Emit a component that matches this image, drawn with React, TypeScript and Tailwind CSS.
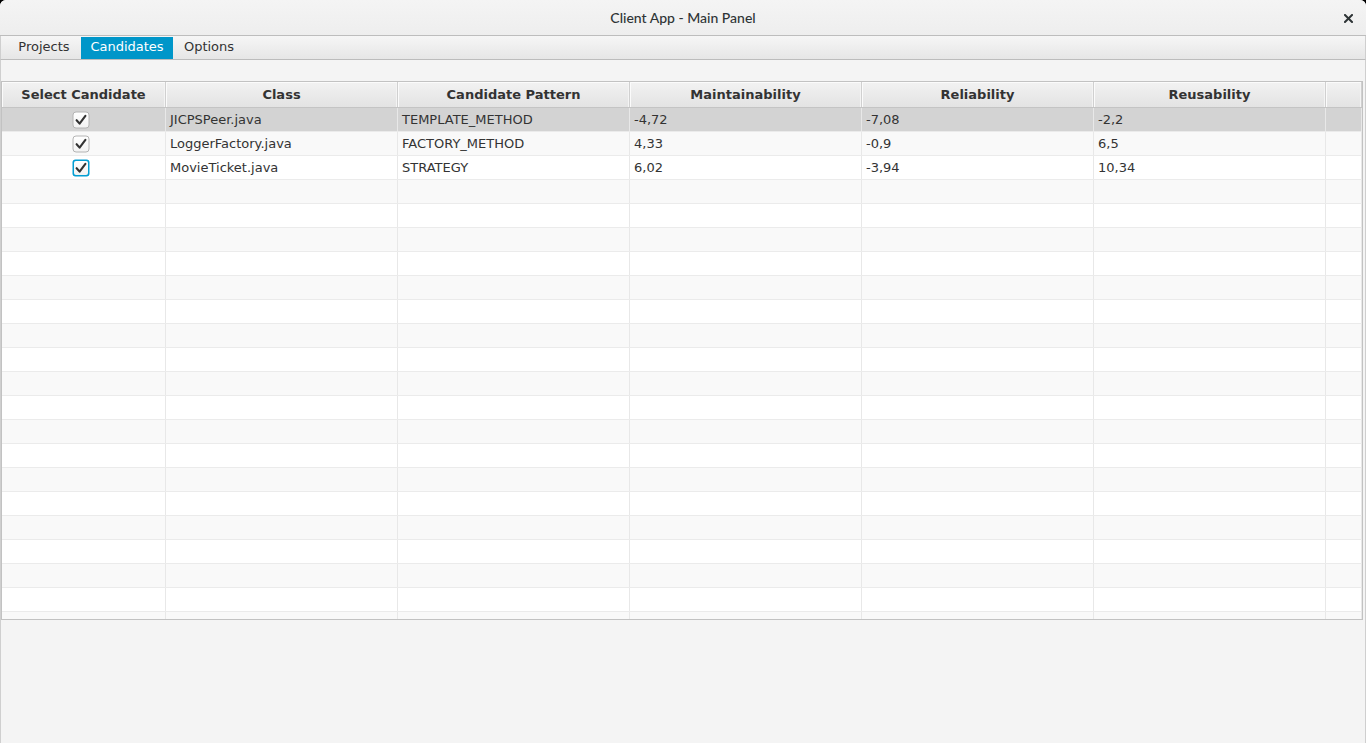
import React from "react";

const rows = [
  { checked: true, focused: false, cls: "JICPSPeer.java", pattern: "TEMPLATE_METHOD", m: "-4,72", rel: "-7,08", reu: "-2,2" },
  { checked: true, focused: false, cls: "LoggerFactory.java", pattern: "FACTORY_METHOD", m: "4,33", rel: "-0,9", reu: "6,5" },
  { checked: true, focused: true, cls: "MovieTicket.java", pattern: "STRATEGY", m: "6,02", rel: "-3,94", reu: "10,34" },
];

const headers = ["Select Candidate", "Class", "Candidate Pattern", "Maintainability", "Reliability", "Reusability", ""];

function CheckBox({ focused }: { focused: boolean }) {
  return (
    <svg width="18" height="18" viewBox="0 0 18 18">
      <defs>
        <linearGradient id="cbg" x1="0" y1="0" x2="0" y2="1">
          <stop offset="0" stopColor="#ffffff" />
          <stop offset="1" stopColor="#f2f2f2" />
        </linearGradient>
      </defs>
      {focused ? (
        <>
          <rect x="0.5" y="0.5" width="17" height="17" rx="3" fill="#039ed3" />
          <rect x="2" y="2" width="14" height="14" rx="2" fill="url(#cbg)" />
        </>
      ) : (
        <rect x="1" y="1" width="16" height="16" rx="3" fill="url(#cbg)" stroke="#b4b4b4" strokeWidth="1" />
      )}
      <path d="M4.6 9.2 L7.6 12.6 L13.4 4.9" fill="none" stroke="#333333" strokeWidth="2.1" strokeLinecap="round" strokeLinejoin="round" />
    </svg>
  );
}

export default function App() {
  const emptyCount = 19;
  return (
    <div className="w-[1366px] h-[743px] bg-black overflow-hidden" style={{ fontFamily: '"DejaVu Sans", sans-serif' }}>
      <div className="w-full h-full bg-[#f4f4f4] rounded-t-[6px] flex flex-col overflow-hidden">
        {/* Title bar */}
        <div className="h-[36px] shrink-0 bg-gradient-to-b from-[#f4f4f4] to-[#eeeeee] border-b border-[#bdbdbd] flex items-center justify-center relative">
          <span className="text-[14px] text-[#2e3436] font-medium" style={{ fontFamily: '"Lato", "Noto Sans", sans-serif' }}>
            Client App - Main Panel
          </span>
          <div className="absolute right-[13px] top-[14px]">
            <svg width="9" height="9" viewBox="0 0 9 9">
              <path d="M1 1 L8 8 M8 1 L1 8" stroke="#2e3436" strokeWidth="2" strokeLinecap="square" />
            </svg>
          </div>
        </div>
        {/* Tab bar */}
        <div className="h-[24px] shrink-0 bg-gradient-to-b from-[#f6f6f6] to-[#e6e6e6] border-b border-[#bcbcbc] pt-[1px] pl-[6px] flex border-x border-x-[#cfcfcf]">
          <div className="h-[22px] w-[74px] flex items-center justify-center pb-[2px] text-[13px] text-[#333333]">Projects</div>
          <div className="h-[22px] w-[92px] flex items-center justify-center pb-[2px] text-[13px] text-white bg-[#0096c9]">Candidates</div>
          <div className="h-[22px] w-[72px] flex items-center justify-center pb-[2px] text-[13px] text-[#333333]">Options</div>
        </div>
        {/* Content */}
        <div className="flex-1 border-x border-[#cfcfcf] pt-[21px]">
          <div className="w-[1362px] h-[539px] border border-[#c2c2c2] bg-white overflow-hidden">
            {/* Header */}
            <div className="grid grid-cols-[164px_232px_232px_232px_232px_232px_36px] h-[26px] border-b border-[#c4c4c4]">
              {headers.map((h, i) => (
                <div
                  key={i}
                  className="h-[25px] border-r border-[#d0d0d0] bg-gradient-to-b from-[#f2f2f2] to-[#e3e3e3] shadow-[inset_1px_1px_0_#fbfbfb,inset_-1px_0_0_#f4f4f4] flex items-center justify-center pt-[1px] text-[13px] font-bold text-[#333333]"
                >
                  {h}
                </div>
              ))}
            </div>
            {/* Rows */}
            {rows.map((r, idx) => {
              const bg = idx === 0 ? "bg-[#d3d3d3]" : idx % 2 === 1 ? "bg-[#f9f9f9]" : "bg-white";
              return (
                <div key={idx} className={`grid grid-cols-[164px_232px_232px_232px_232px_232px_36px] h-[24px] border-b border-[#ebebeb] ${bg}`}>
                  <div className="border-r border-[#e8e8e8] flex items-center justify-center pr-[5px]">
                    <CheckBox focused={r.focused} />
                  </div>
                  <div className="border-r border-[#e8e8e8] flex items-center pl-[4px] text-[13px] text-[#333333]">{r.cls}</div>
                  <div className="border-r border-[#e8e8e8] flex items-center pl-[4px] text-[13px] text-[#333333]">{r.pattern}</div>
                  <div className="border-r border-[#e8e8e8] flex items-center pl-[4px] text-[13px] text-[#333333]">{r.m}</div>
                  <div className="border-r border-[#e8e8e8] flex items-center pl-[4px] text-[13px] text-[#333333]">{r.rel}</div>
                  <div className="border-r border-[#e8e8e8] flex items-center pl-[4px] text-[13px] text-[#333333]">{r.reu}</div>
                  <div className="border-r border-[#e8e8e8]"></div>
                </div>
              );
            })}
            {Array.from({ length: emptyCount }).map((_, j) => {
              const idx = j + 3;
              const bg = idx % 2 === 1 ? "bg-[#f9f9f9]" : "bg-white";
              return (
                <div key={idx} className={`grid grid-cols-[164px_232px_232px_232px_232px_232px_36px] h-[24px] border-b border-[#ebebeb] ${bg}`}>
                  {Array.from({ length: 7 }).map((__, k) => (
                    <div key={k} className="border-r border-[#e8e8e8]"></div>
                  ))}
                </div>
              );
            })}
          </div>
        </div>
      </div>
    </div>
  );
}
